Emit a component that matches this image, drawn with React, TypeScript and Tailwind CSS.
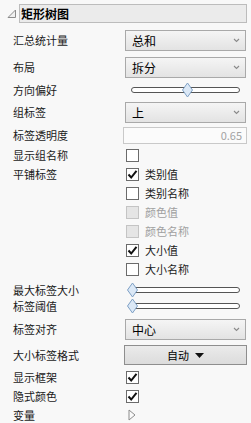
import type { ReactNode } from "react"

const FONT = { fontFamily: '"Noto Sans CJK SC", "Noto Sans", sans-serif' }

function Label({ children }: { children: ReactNode }) {
  return <div className="w-[123px] shrink-0 pl-[13px] text-[11px] leading-none text-[#1a1a1a]">{children}</div>
}

function Row({ label, className, children }: { label?: string; className: string; children?: ReactNode }) {
  return (
    <div className={`flex items-center ${className}`}>
      <Label>{label}</Label>
      <div className="flex flex-1 items-center">{children}</div>
    </div>
  )
}

function Chevron() {
  return (
    <svg width="7" height="5" viewBox="0 0 7 5" className="ml-auto mr-[5px]">
      <path d="M1 1 L3.5 3.5 L6 1" fill="none" stroke="#8a8a8a" strokeWidth="1.1" />
    </svg>
  )
}

function Dropdown({ value }: { value: string }) {
  return (
    <div className="ml-[2px] flex h-[21px] w-[121px] items-center border border-[#a9a9a9] bg-gradient-to-b from-[#f5f5f5] to-[#e3e3e3] pl-[6px] text-[12px] text-black">
      {value}
      <Chevron />
    </div>
  )
}

function Slider({ pos }: { pos: number }) {
  return (
    <div className="relative ml-[8px] h-[6px] w-[109px] rounded-full border border-[#555] bg-white">
      <svg
        width="11"
        height="15"
        viewBox="0 0 11 15"
        className="absolute top-1/2 -translate-y-1/2"
        style={{ left: pos - 5 }}
      >
        <path d="M5.5 0.5 L10.5 7.5 L5.5 14.5 L0.5 7.5 Z" fill="#dbe8f6" stroke="#7d9fc4" />
      </svg>
    </div>
  )
}

function Checkbox({ checked, disabled, text }: { checked?: boolean; disabled?: boolean; text?: string }) {
  return (
    <div className="ml-[3px] flex items-center">
      <div
        className={`flex h-[13px] w-[13px] items-center justify-center border ${
          disabled ? "border-[#c4c4c4] bg-[#e5e5e5]" : "border-[#6b6b6b] bg-white"
        }`}
      >
        {checked && (
          <svg width="11" height="11" viewBox="0 0 11 11">
            <path d="M1.5 5.5 L4.2 8.5 L9.5 1.8" fill="none" stroke="#111" strokeWidth="2" />
          </svg>
        )}
      </div>
      {text && (
        <span className={`ml-[6px] text-[11px] leading-none ${disabled ? "text-[#a0a0a0]" : "text-[#1a1a1a]"}`}>
          {text}
        </span>
      )}
    </div>
  )
}

export default function App() {
  return (
    <div className="h-[423px] w-[251px] overflow-hidden bg-[#f8f8f8]" style={FONT}>
      <div className="flex items-center pt-[4px]">
        <svg width="10" height="10" viewBox="0 0 10 10" className="ml-[7px] mr-[2px]">
          <path d="M1 8.5 L8.5 1 L8.5 8.5 Z" fill="#f0f0f0" stroke="#8c8c8c" />
        </svg>
        <div className="flex h-[19px] w-[228px] items-center border border-[#bcbcbc] bg-[#ebebeb] pl-[1px] text-[12px] font-bold text-black">
          矩形树图
        </div>
      </div>

      <Row label="汇总统计量" className="mt-[7px] h-[21px]">
        <Dropdown value="总和" />
      </Row>
      <Row label="布局" className="mt-[6px] h-[21px]">
        <Dropdown value="拆分" />
      </Row>
      <Row label="方向偏好" className="h-[24px]">
        <Slider pos={55} />
      </Row>
      <Row label="组标签" className="h-[21px]">
        <Dropdown value="上" />
      </Row>
      <Row label="标签透明度" className="mt-[4px] h-[17px]">
        <div className="flex h-[17px] w-[124px] items-center justify-end border border-[#c9c9c9] bg-[#fbfbfb] pr-[4px] text-[11px] text-[#a3a3a3]">
          0.65
        </div>
      </Row>

      <div className="mt-[2px]">
        <Row label="显示组名称" className="h-[19px]">
          <Checkbox />
        </Row>
        <Row label="平铺标签" className="h-[19px]">
          <Checkbox checked text="类别值" />
        </Row>
        <Row className="h-[19px]">
          <Checkbox text="类别名称" />
        </Row>
        <Row className="h-[19px]">
          <Checkbox disabled text="颜色值" />
        </Row>
        <Row className="h-[19px]">
          <Checkbox disabled text="颜色名称" />
        </Row>
        <Row className="h-[19px]">
          <Checkbox checked text="大小值" />
        </Row>
        <Row className="h-[19px]">
          <Checkbox text="大小名称" />
        </Row>
      </div>

      <Row label="最大标签大小" className="mt-[1px] h-[20px]">
        <Slider pos={0} />
      </Row>
      <Row label="标签阈值" className="-mt-[4px] h-[20px]">
        <Slider pos={0} />
      </Row>
      <Row label="标签对齐" className="mt-[3px] h-[21px]">
        <Dropdown value="中心" />
      </Row>
      <Row label="大小标签格式" className="mt-[5px] h-[20px]">
        <div className="ml-[1px] flex h-[20px] w-[123px] items-center justify-center border border-[#8e8e8e] bg-gradient-to-b from-[#ebebeb] to-[#dcdcdc] text-[11px] text-black">
          自动
          <svg width="9" height="5" viewBox="0 0 9 5" className="ml-[6px]">
            <path d="M0 0 L9 0 L4.5 5 Z" fill="#111" />
          </svg>
        </div>
      </Row>
      <Row label="显示框架" className="mt-[2px] h-[20px]">
        <Checkbox checked />
      </Row>
      <Row label="隐式颜色" className="h-[19px]">
        <Checkbox checked />
      </Row>
      <Row label="变量" className="h-[18px]">
        <svg width="8" height="12" viewBox="0 0 8 12" className="ml-[5px]">
          <path d="M1 1 L7 6 L1 11 Z" fill="#fafafa" stroke="#8c8c8c" />
        </svg>
      </Row>
    </div>
  )
}
